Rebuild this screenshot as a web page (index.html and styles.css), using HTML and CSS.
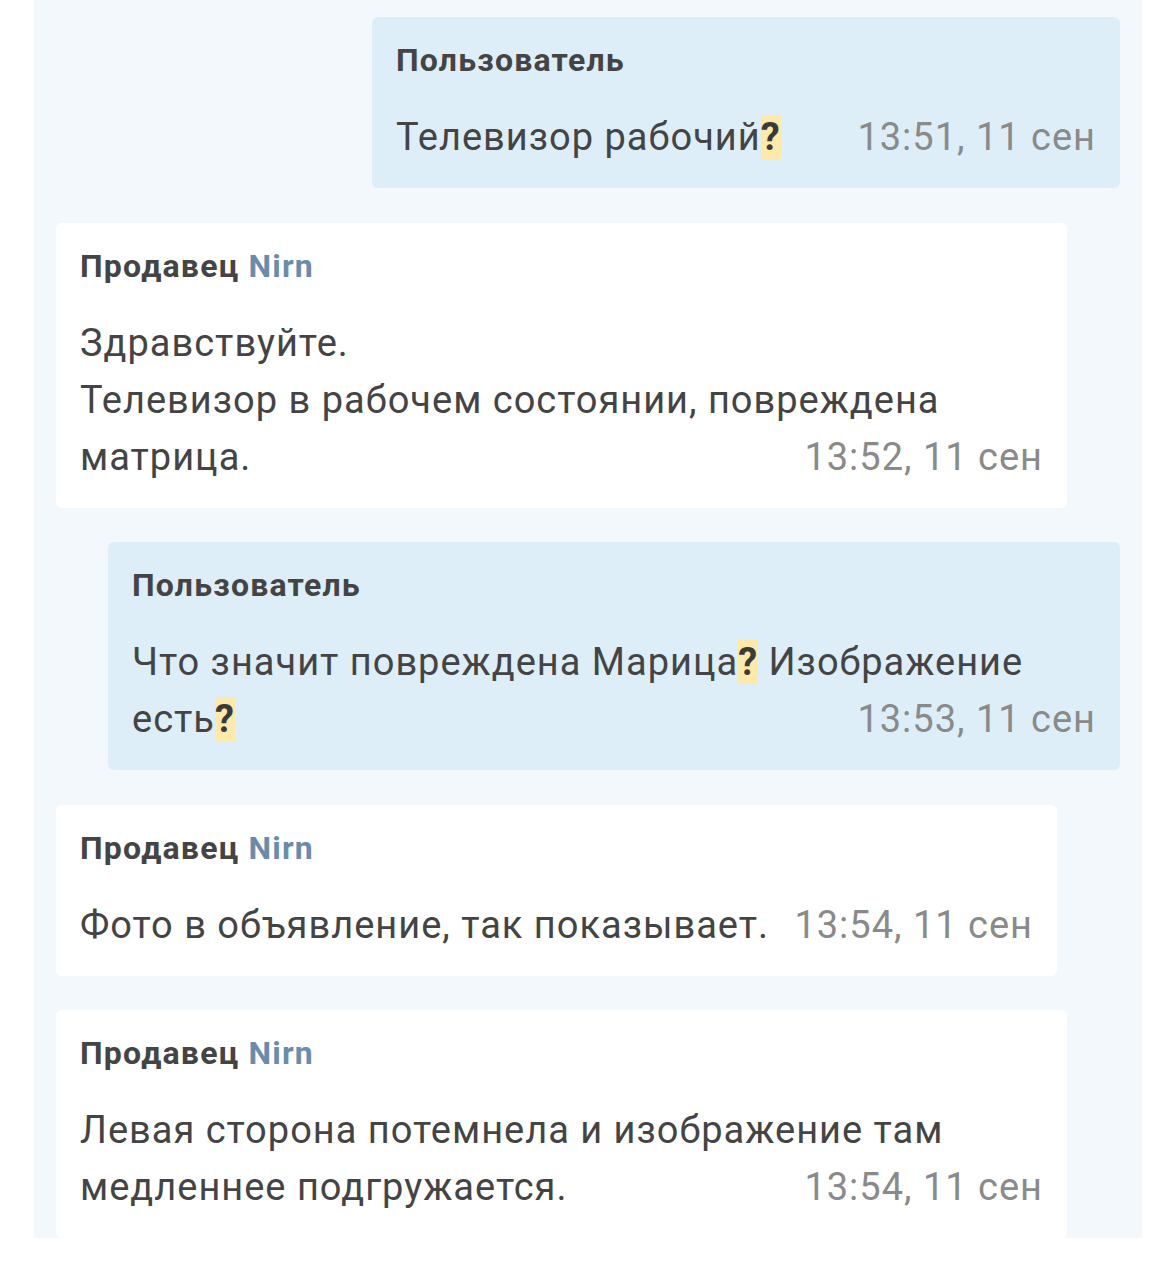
FILE: index.html
```html
<!DOCTYPE html>
<html lang="ru">
<head>
<meta charset="utf-8">
<title>Чат</title>
<link rel="stylesheet" href="styles.css">
</head>
<body>
<div class="chat">
  <div class="bubble out w1">
    <div class="name">Пользователь</div>
    <div class="text">
      <div class="last"><span>Телевизор рабочий<b class="q">?</b></span><span class="time">13:51, 11 сен</span></div>
    </div>
  </div>
  <div class="bubble in w2">
    <div class="name">Продавец <span class="nick">Nirn</span></div>
    <div class="text">
      <div>Здравствуйте.</div>
      <div>Телевизор в рабочем состоянии, повреждена</div>
      <div class="last"><span>матрица.</span><span class="time">13:52, 11 сен</span></div>
    </div>
  </div>
  <div class="bubble out w3">
    <div class="name">Пользователь</div>
    <div class="text">
      <div>Что значит повреждена Марица<b class="q">?</b> Изображение</div>
      <div class="last"><span>есть<b class="q">?</b></span><span class="time">13:53, 11 сен</span></div>
    </div>
  </div>
  <div class="bubble in w4">
    <div class="name">Продавец <span class="nick">Nirn</span></div>
    <div class="text">
      <div class="last"><span>Фото в объявление, так показывает.</span><span class="time">13:54, 11 сен</span></div>
    </div>
  </div>
  <div class="bubble in w2">
    <div class="name">Продавец <span class="nick">Nirn</span></div>
    <div class="text">
      <div>Левая сторона потемнела и изображение там</div>
      <div class="last"><span>медленнее подгружается.</span><span class="time">13:54, 11 сен</span></div>
    </div>
  </div>
</div>
</body>
</html>
```

FILE: styles.css
```css
* { box-sizing: border-box; }
html, body { margin: 0; padding: 0; background: #ffffff; }
body {
  font-family: Roboto, "Noto Sans", "Liberation Sans", sans-serif;
  color: #444444;
}
.chat {
  margin-left: 34px;
  width: 1108px;
  height: 1238px;
  overflow: hidden;
  background: #f2f8fc;
  padding: 17px 22px 0;
  display: flex;
  flex-direction: column;
  gap: 34.5px;
}
.bubble {
  border-radius: 6px;
  padding: 23px 24px 22px;
  flex: none;
}
.out { background: #deeef8; align-self: flex-end; }
.in { background: #ffffff; align-self: flex-start; }
.w1 { width: 748px; }
.w2 { width: 1011px; }
.w3 { width: 1012px; }
.w4 { width: 1001px; }
.name {
  font-size: 32px;
  font-weight: 700;
  letter-spacing: 1.2px;
  line-height: 40px;
  color: #444444;
  margin-bottom: 29px;
}
.nick { color: #6b8bab; }
.text {
  font-size: 38px;
  letter-spacing: 1px;
  line-height: 57px;
  color: #444444;
}
.last {
  display: flex;
  justify-content: space-between;
  white-space: nowrap;
}
.time { color: #8a8a8a; }
.q {
  font-weight: 700;
  background: #fde9a8;
  color: #3a3a3a;
}
```
